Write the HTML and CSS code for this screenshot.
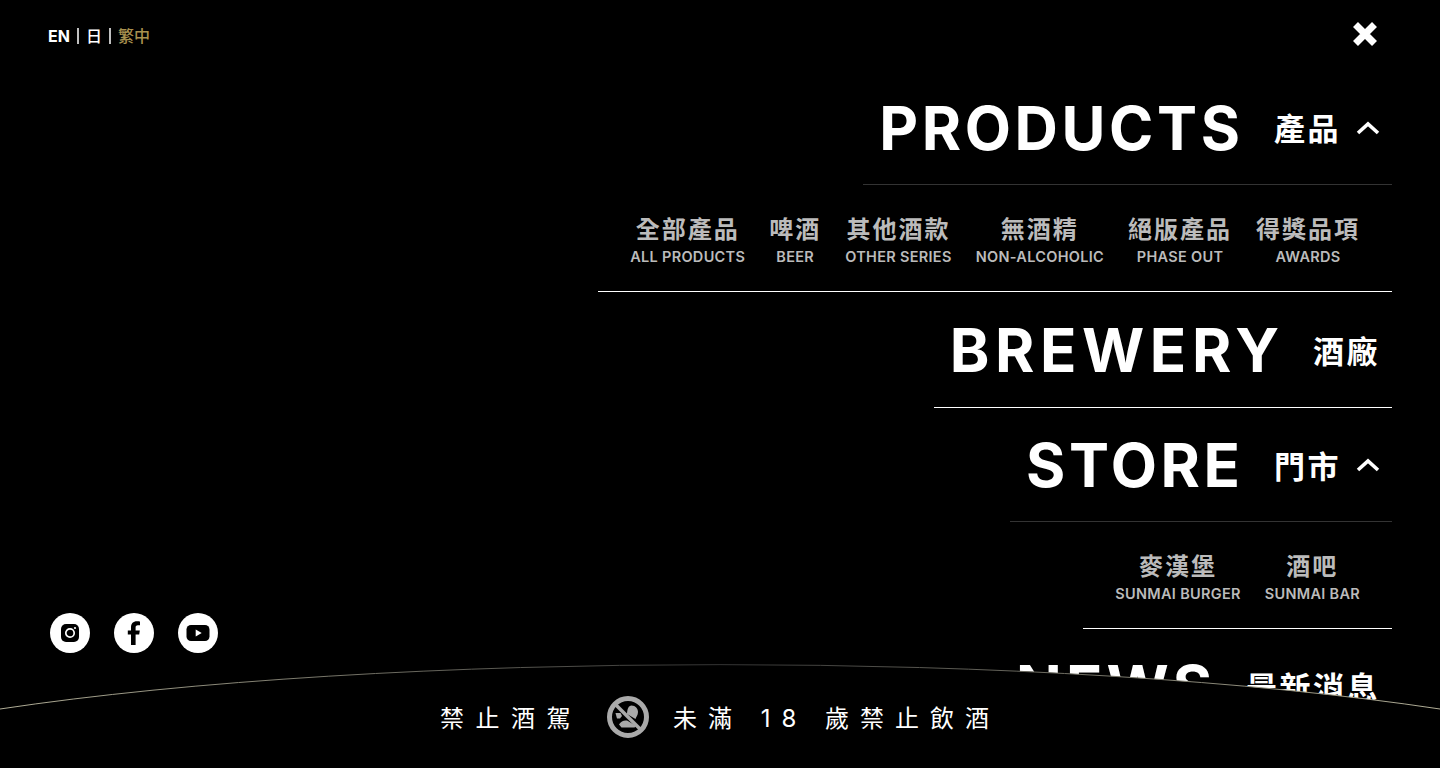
FILE: index.html
```html
<!DOCTYPE html>
<html lang="zh-Hant">
  <head>
    <meta charset="UTF-8" />
    <meta name="viewport" content="width=device-width, initial-scale=1.0" />
    <title>Sunmai menu</title>
    <link rel="stylesheet" href="styles.css">
  </head>
  <body>
    <div class="page">
      <aside class="side">
        <div class="lang">
          <a href="#">EN</a>
          <span class="lang-sep"></span>
          <a href="#" class="lang-zh">日</a>
          <span class="lang-sep"></span>
          <a href="#" class="lang-zh lang-active">繁中</a>
        </div>
        <div class="social">
          <a href="#" class="social-link" aria-label="Instagram">
            <svg width="20" height="20" viewBox="0 0 20 20">
              <rect x="1" y="1" width="18" height="18" rx="5" fill="#000"/>
              <circle cx="10" cy="10" r="4.2" fill="none" stroke="#fff" stroke-width="1.7"/>
              <circle cx="15" cy="5" r="1.1" fill="#fff"/>
            </svg>
          </a>
          <a href="#" class="social-link" aria-label="Facebook">
            <svg width="14" height="26" viewBox="0 0 14 26">
              <path d="M4 25V14.500H.8v-4H4V7.400C4 3.400 6.300 1.300 9.800 1.300c1.400 0 2.700.1 3.200.2v3.700h-2.100c-1.800 0-2.300 1-2.300 2.200v3.100h4.200l-.6 4H8.600V25z" fill="#000"/>
            </svg>
          </a>
          <a href="#" class="social-link" aria-label="YouTube">
            <svg width="24" height="18" viewBox="0 0 24 18">
              <rect x="0.500" y="1" width="23" height="16" rx="4.500" fill="#000"/>
              <path d="M9.700 5.500 15.700 9l-6 3.500z" fill="#fff"/>
            </svg>
          </a>
        </div>
      </aside>

      <nav class="menu">
        <button class="close" aria-label="Close">
          <svg width="26" height="26" viewBox="0 0 26 26">
            <path d="M3.500 3.500l19 19M22.500 3.500l-19 19" stroke="#fff" stroke-width="7" fill="none"/>
          </svg>
        </button>

        <a href="#" class="menu-head menu-head-open">
          <span class="menu-en">PRODUCTS</span>
          <span class="menu-zh">產品</span>
          <svg class="chevron" width="24" height="14" viewBox="0 0 24 14">
            <path d="M2 12 12 3l10 9" stroke="#fff" stroke-width="3.600" fill="none"/>
          </svg>
        </a>
        <ul class="submenu">
          <li><b>全部產品</b><span>ALL PRODUCTS</span></li>
          <li><b>啤酒</b><span>BEER</span></li>
          <li><b>其他酒款</b><span>OTHER SERIES</span></li>
          <li><b>無酒精</b><span>NON-ALCOHOLIC</span></li>
          <li><b>絕版產品</b><span>PHASE OUT</span></li>
          <li><b>得獎品項</b><span>AWARDS</span></li>
        </ul>

        <a href="#" class="menu-head menu-head-tall">
          <span class="menu-en menu-en-wide">BREWERY</span>
          <span class="menu-zh">酒廠</span>
        </a>

        <a href="#" class="menu-head menu-head-open menu-head-short">
          <span class="menu-en">STORE</span>
          <span class="menu-zh">門市</span>
          <svg class="chevron" width="24" height="14" viewBox="0 0 24 14">
            <path d="M2 12 12 3l10 9" stroke="#fff" stroke-width="3.600" fill="none"/>
          </svg>
        </a>
        <ul class="submenu">
          <li><b>麥漢堡</b><span>SUNMAI BURGER</span></li>
          <li><b>酒吧</b><span>SUNMAI BAR</span></li>
        </ul>

        <a href="#" class="menu-head">
          <span class="menu-en menu-en-news">NEWS</span>
          <span class="menu-zh">最新消息</span>
        </a>
      </nav>

      <footer class="warning">
        <svg class="warning-curve" width="1440" height="105" viewBox="0 0 1440 105">
          <defs>
            <linearGradient id="curve-line" gradientUnits="userSpaceOnUse" x1="0" y1="0" x2="1440" y2="0">
              <stop offset="0" stop-color="#b0ad96"/>
              <stop offset="0.5" stop-color="#333"/>
              <stop offset="1" stop-color="#b0ad96"/>
            </linearGradient>
          </defs>
          <path d="M0 46A1000 145 0 0 1 1440 46V105H0Z" fill="#000"/>
          <path d="M0 46A1000 145 0 0 1 1440 46" fill="none" stroke="url(#curve-line)" stroke-width="1"/>
        </svg>
        <div class="warning-text">
          <span class="warning-a">禁止酒駕</span>
          <svg width="42" height="42" viewBox="0 0 42 42">
            <path d="M24.500 9.500c4 0 6.500 3 6.500 6.500s-2 5-2.500 7l-8.500-5c.3-5 1.500-8.500 4.500-8.500z" fill="#aaa"/>
            <path d="M12 28.500c2-3.500 5-4.500 8-4l9.500 5.500-2 1.500h-13z" fill="#aaa"/>
            <path d="M8.500 17h5l1.500 3-2 2.500h-3z" fill="#aaa"/>
            <circle cx="21" cy="21" r="18.500" fill="none" stroke="#aaa" stroke-width="5"/>
            <path d="M8 8l26 26" stroke="#aaa" stroke-width="3.500"/>
          </svg>
          <span class="warning-b">未滿 18 歲禁止飲酒</span>
        </div>
      </footer>
    </div>
  </body>
</html>
```

FILE: styles.css
```css
* {
  box-sizing: border-box;
}
html,
body {
  margin: 0;
  padding: 0;
  background: #000;
}
body {
  font-family: Inter, "Noto Sans CJK TC", sans-serif;
  color: #fff;
}
a {
  color: inherit;
  text-decoration: none;
}
.page {
  position: relative;
  height: 768px;
  overflow: hidden;
  display: flex;
  justify-content: space-between;
  padding: 0 48px;
}

/* left column */
.side {
  display: flex;
  flex-direction: column;
  justify-content: space-between;
  padding: 26px 0 115px;
}
.lang {
  display: flex;
  align-items: center;
  height: 20px;
  font-size: 16px;
  font-weight: 500;
}
.lang a:first-child {
  font-weight: 700;
}
.lang-zh {
  padding-bottom: 2px;
}
.lang-sep {
  width: 2px;
  height: 16px;
  margin: 0 7px;
  background: #fff;
  transform: scaleX(0.75);
}
.lang-active {
  color: #a8914f;
}
.social {
  display: flex;
  gap: 24px;
  margin-left: 2px;
}
.social-link {
  width: 40px;
  height: 40px;
  border-radius: 50%;
  background: #fff;
  display: flex;
  align-items: center;
  justify-content: center;
}

/* right menu */
.menu {
  display: flex;
  flex-direction: column;
  align-items: flex-end;
}
.close {
  display: flex;
  align-items: flex-start;
  height: 70px;
  padding: 21px 14px 0 0;
  border: 0;
  background: none;
}
.close svg {
  display: block;
}
.menu-head {
  display: flex;
  align-items: center;
  height: 115px;
  padding: 1px 12px 0 16px;
  border-bottom: 1px solid #fff;
}
.menu-head-tall {
  height: 116px;
}
.menu-head-short {
  height: 114px;
}
.menu-head-open {
  border-bottom-color: #333;
}
.menu-en {
  --track: 3.6px;
  font-size: 60px;
  font-weight: 700;
  letter-spacing: var(--track);
  margin-right: calc(var(--track) * -1);
}
.menu-en-wide {
  --track: 5.6px;
}
.menu-en-news {
  --track: 4.2px;
}
.menu-zh {
  margin-left: 34px;
  padding-bottom: 2px;
  font-size: 31px;
  font-weight: 700;
  letter-spacing: 2.5px;
}
.chevron {
  margin-left: 15px;
}
.submenu {
  display: flex;
  gap: 24px;
  height: 107px;
  margin: 0;
  padding: 31px 32px 0;
  list-style: none;
  border-bottom: 1px solid #fff;
  color: #bbb;
  text-align: center;
}
.submenu li {
  display: flex;
  flex-direction: column;
}
.submenu b {
  font-size: 24px;
  line-height: 28px;
  font-weight: 700;
  letter-spacing: 2px;
}
.submenu span {
  margin-top: 3px;
  font-size: 14.500px;
  line-height: 20px;
  font-weight: 600;
  letter-spacing: 0.3px;
}

/* bottom warning over the menu */
.warning {
  position: absolute;
  left: 0;
  bottom: 0;
  width: 1440px;
  height: 105px;
}
.warning-curve {
  position: absolute;
  left: 0;
  top: 0;
}
.warning-text {
  position: relative;
  display: flex;
  align-items: center;
  height: 100%;
  padding: 2px 0 0 440px;
  font-size: 24px;
  font-weight: 400;
  color: #fff;
}
.warning-a {
  letter-spacing: 11.5px;
}
.warning-text svg {
  margin: 0 24px 0 25px;
}
.warning-b {
  letter-spacing: 11px;
}
```
